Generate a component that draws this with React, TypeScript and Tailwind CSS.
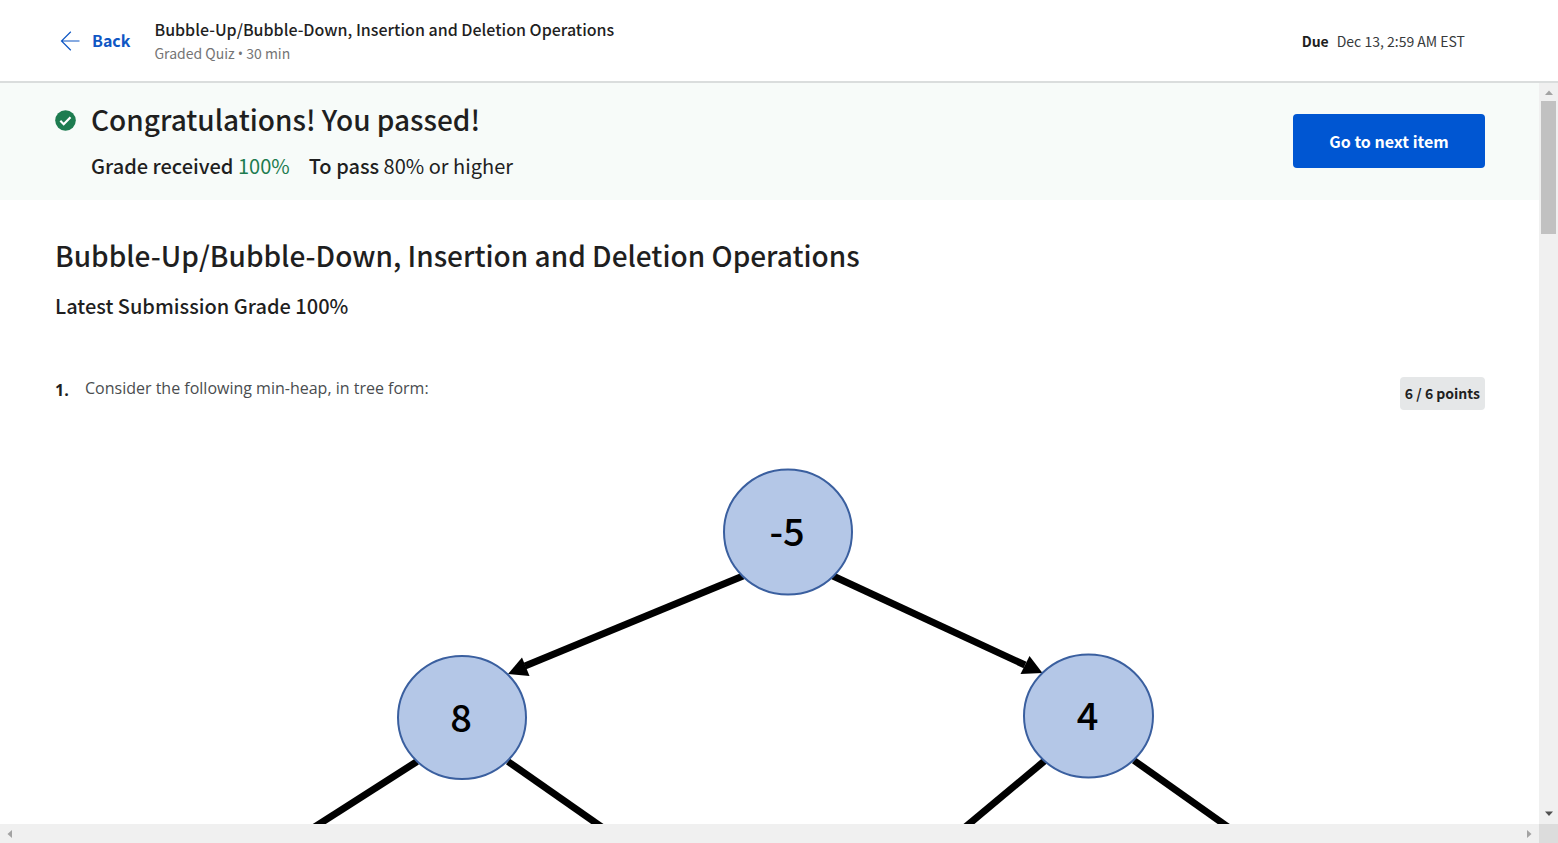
const sans = "font-['Noto_Sans_CJK_SC',sans-serif]";

type Node = { label: string; cx: number; cy: number; rx: number; ry: number };

const nodes: Node[] = [
  { label: "-5", cx: 733, cy: 92, rx: 64, ry: 62.5 },
  { label: "8", cx: 407, cy: 277.5, rx: 64, ry: 61.5 },
  { label: "4", cx: 1033.5, cy: 276, rx: 64.5, ry: 61.5 },
];

function HeapTree() {
  return (
    <svg
      viewBox="0 0 1430 440"
      className="block w-full"
      role="img"
      aria-label="Min-heap in tree form"
    >
      <g stroke="#000" strokeWidth="7" fill="none">
        <path d="M688 136 L470 226" />
        <path d="M778 136 L970 225" />
        <path d="M362 321.500 L233 404" />
        <path d="M453 321.500 L571 404" />
        <path d="M990 320.500 L890 404" />
        <path d="M1079 320.500 L1197 404" />
      </g>
      <path d="M453 234 L467 217.500 L474.500 236 Z" />
      <path d="M987.500 233 L974.500 216 L965.500 234 Z" />
      {nodes.map((n) => (
        <g key={n.label}>
          <ellipse
            cx={n.cx}
            cy={n.cy}
            rx={n.rx}
            ry={n.ry}
            fill="#b4c7e7"
            stroke="#3a5f9f"
            strokeWidth="2"
          />
          <text
            x={n.cx - 1}
            y={n.cy + 14}
            textAnchor="middle"
            className="text-[38px] font-medium"
          >
            {n.label}
          </text>
        </g>
      ))}
    </svg>
  );
}

function Triangle({ d, className }: { d: string; className: string }) {
  return (
    <svg viewBox="0 0 10 10" className={`size-[10px] ${className}`} aria-hidden="true">
      <path d={d} fill="currentColor" />
    </svg>
  );
}

export default function App() {
  return (
    <div className={`flex h-screen flex-col overflow-hidden bg-white text-[#1f1f1f] ${sans}`}>
      <header className="flex shrink-0 items-center border-b-2 border-[#dadddd] pt-4 pr-[93px] pb-[17px] pl-[60px]">
        <a href="#back" className="flex items-center gap-3 text-[16px] leading-6 font-bold text-[#0f57c4]">
          <svg viewBox="0 0 20 20" className="mt-0.5 size-5" fill="none" stroke="currentColor" strokeWidth="1.200" aria-hidden="true">
            <path d="M19.500 10 H1.500 M10.800 0.800 L1.500 10 L10.800 19.200" />
          </svg>
          Back
        </a>
        <div className="ml-6 flex-1">
          <p className="text-[16px] leading-[26px] font-medium">
            Bubble-Up/Bubble-Down, Insertion and Deletion Operations
          </p>
          <p className="text-[14px] leading-[22px] text-[#757575]">
            Graded Quiz <span className="font-['Open_Sans',sans-serif] leading-none">•</span> 30 min
          </p>
        </div>
        <p className="flex gap-2 pt-0.5 text-[14px] leading-6">
          <span className="font-bold">Due</span>
          <span className="text-[#373a3c]">Dec 13, 2:59 AM EST</span>
        </p>
      </header>

      <div className="flex min-h-0 flex-1">
        <main className="min-w-0 flex-1 overflow-hidden">
          <section className="flex items-center justify-between bg-[#f7fbf9] pt-[17px] pr-[54px] pb-[18px] pl-[55px]">
            <div className="flex gap-[15px]">
              <svg viewBox="0 0 21 21" className="mt-[10px] size-[21px]" aria-hidden="true">
                <circle cx="10.500" cy="10.500" r="10.300" fill="#1d7c50" />
                <path d="M5.300 10.800 L8.700 14.200 L15.500 7.200" fill="none" stroke="#fff" strokeWidth="2.200" />
              </svg>
              <div>
                <h1 className="text-[28px] leading-[38px] font-medium">Congratulations! You passed!</h1>
                <p className="mt-3 text-[20px] leading-8">
                  <span className="font-medium">Grade received</span>{" "}
                  <span className="text-[#1d7c50]">100%</span>
                  <span className="ml-[19px] font-medium">To pass</span> 80% or higher
                </p>
              </div>
            </div>
            <button className="h-[54px] w-[192px] rounded bg-[#0056d2] text-[16px] font-bold text-white">
              Go to next item
            </button>
          </section>

          <div className="pt-[33px] pr-[54px] pl-[55px]">
            <h2 className="text-[28px] leading-[44px] font-medium">
              Bubble-Up/Bubble-Down, Insertion and Deletion Operations
            </h2>
            <p className="mt-[13px] text-[20px] leading-8 font-medium">Latest Submission Grade 100%</p>

            <div className="mt-[55px] flex items-start">
              <span className="w-[30px] pt-[3px] font-['Open_Sans',sans-serif] text-[16px] leading-5 font-bold">1.</span>
              <p className="flex-1 font-['Open_Sans',sans-serif] text-[16px] leading-[22px] text-[#4a4d4f]">
                Consider the following min-heap, in tree form:
              </p>
              <span className="rounded bg-[#e5e7e8] px-[5px] text-[14px] leading-[33px] font-bold">
                6 / 6 points
              </span>
            </div>
            <div className="mt-[30px]">
              <HeapTree />
            </div>
          </div>
        </main>

        <div className="flex w-[19px] shrink-0 flex-col items-center bg-[#f0f0f0]">
          <div className="flex h-[18px] items-center">
            <Triangle d="M1 8 L5 3.500 L9 8 Z" className="text-[#a3a3a3]" />
          </div>
          <div className="h-[133px] w-[15px] bg-[#c1c1c1]" />
          <div className="mt-auto flex h-5 items-center">
            <Triangle d="M1 2.500 L5 7 L9 2.500 Z" className="text-[#505050]" />
          </div>
        </div>
      </div>

      <div className="flex h-[19px] shrink-0 items-center bg-[#f0f0f0]">
        <div className="flex flex-1 items-center justify-between px-[5px]">
          <Triangle d="M7 1 L2.500 5 L7 9 Z" className="text-[#a3a3a3]" />
          <Triangle d="M3 1 L7.500 5 L3 9 Z" className="text-[#a3a3a3]" />
        </div>
        <div className="h-full w-[19px] bg-[#dcdcdc]" />
      </div>
    </div>
  );
}
